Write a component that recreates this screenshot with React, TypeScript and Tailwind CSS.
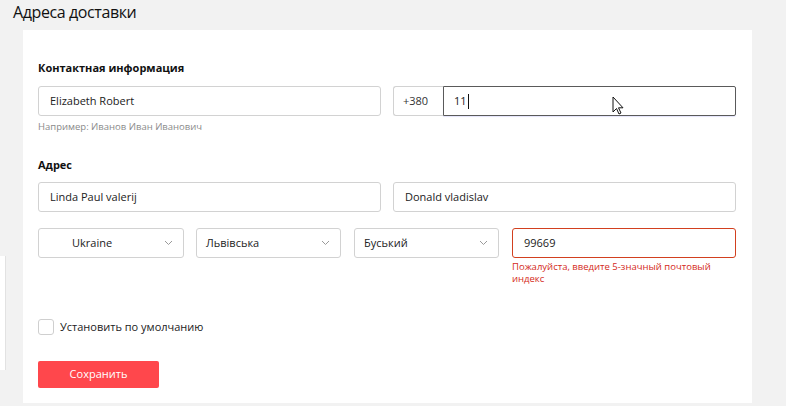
import React from "react";

const FONT = { fontFamily: '"Open Sans", "Noto Sans", Arial, sans-serif' };

function Chevron() {
  return (
    <svg width="9" height="6" viewBox="0 0 9 6" className="shrink-0">
      <path d="M1 1l3.5 3.5L8 1" fill="none" stroke="#9a9a9a" strokeWidth="1" />
    </svg>
  );
}

function Field({ value, className = "" }: { value: string; className?: string }) {
  return (
    <div
      className={`flex h-[30px] items-center rounded-[3px] border border-[#d2d2d2] bg-white pl-[11px] text-[11px] text-[#222] ${className}`}
    >
      {value}
    </div>
  );
}

function Select({ value, width, center }: { value: string; width: string; center?: boolean }) {
  return (
    <div
      className={`flex h-[30px] items-center justify-between rounded-[3px] border border-[#d2d2d2] bg-white pr-[10px] text-[11px] text-[#222] ${width} ${center ? "pl-[33px]" : "pl-[9px]"}`}
    >
      <span>{value}</span>
      <Chevron />
    </div>
  );
}

export default function App() {
  return (
    <div className="relative h-[406px] w-[786px] overflow-hidden bg-[#f2f2f2]" style={FONT}>
      <h1 className="ml-[13px] h-[30px] pt-[1px] text-[16px] font-normal leading-[22px] tracking-[-0.4px] text-[#111]">
        Адреса доставки
      </h1>

      {/* left neighbour panel sliver */}
      <div className="absolute left-0 top-[256px] h-[114px] w-[6px] border-r border-[#e2e2e2] bg-white" />

      <div className="ml-[23px] h-[373px] w-[729px] bg-white px-[15px] pt-[30px]">
        <h3 className="mb-[10px] text-[11px] font-bold leading-[16px] text-[#111]">Контактная информация</h3>
        <div className="flex gap-[12px]">
          <div className="w-[343px]">
            <Field value="Elizabeth Robert" />
            <p className="mt-[4px] text-[9.5px] leading-[14px] text-[#8a8a8a]">Например: Иванов Иван Иванович</p>
          </div>
          <div className="flex h-[30px] w-[343px]">
            <div className="flex w-[50px] items-center rounded-l-[3px] border border-r-0 border-[#d2d2d2] pl-[9px] text-[11px] text-[#333]">
              +380
            </div>
            <div className="flex flex-1 items-center rounded-r-[2px] border border-[#5a5a5a] pl-[10px] text-[11px] text-[#222] shadow-[0_1px_1px_#e4e4fb]">
              11<span className="ml-[1px] inline-block h-[15px] w-[1px] bg-[#111]" />
            </div>
          </div>
        </div>

        <h3 className="mb-[9px] mt-[23px] text-[11px] font-bold leading-[16px] text-[#111]">Адрес</h3>
        <div className="flex gap-[12px]">
          <Field value="Linda Paul valerij" className="w-[343px]" />
          <Field value="Donald vladislav" className="w-[343px]" />
        </div>

        <div className="mt-[16px] flex">
          <Select value="Ukraine" width="w-[146px]" center />
          <div className="w-[12px]" />
          <Select value="Львівська" width="w-[145px]" />
          <div className="w-[13px]" />
          <Select value="Буський" width="w-[145px]" />
          <div className="w-[13px]" />
          <div className="w-[224px]">
            <div className="flex h-[30px] items-center rounded-[3px] border border-[#d2401f] pl-[11px] text-[11px] text-[#222]">
              99669
            </div>
            <p className="mt-[3px] w-[200px] text-[9.5px] leading-[12px] text-[#d42a22]">
              Пожалуйста, введите 5-значный почтовый индекс
            </p>
          </div>
        </div>

        <label className="mt-[34px] flex items-center gap-[6px]">
          <span className="h-[16px] w-[16px] rounded-[3px] border border-[#cfcfcf] bg-white" />
          <span className="text-[11px] text-[#222]">Установить по умолчанию</span>
        </label>

        <button className="mt-[25px] h-[27px] w-[121px] rounded-[2px] bg-[#ff474c] text-[11px] text-white">
          Сохранить
        </button>
      </div>

      {/* mouse pointer */}
      <svg className="absolute left-[612px] top-[96px]" width="14" height="20" viewBox="0 0 14 20">
        <path d="M1 1v15l3.5-3.5 2.5 5.5 2-1-2.5-5.2H11z" fill="#fff" stroke="#111" strokeWidth="1" strokeLinejoin="round" />
      </svg>
    </div>
  );
}
